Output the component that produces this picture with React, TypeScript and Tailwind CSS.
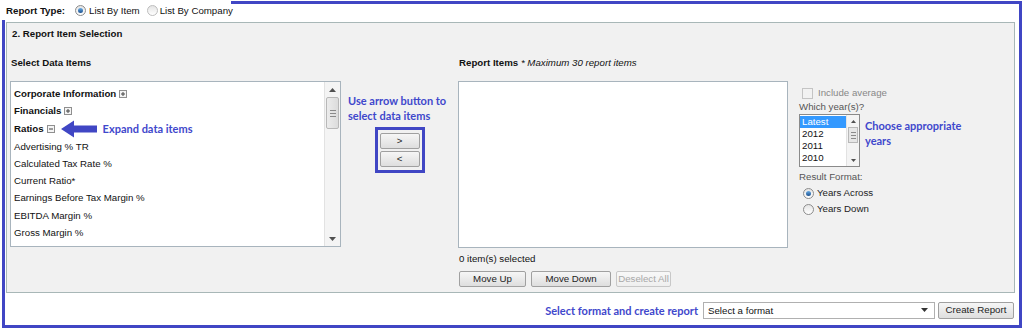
import React from 'react';

// Annotation colour used for the highlight frame and helper text
const NOTE = 'text-[#3f48cc]';

const ratioItems = [
  'Advertising % TR',
  'Calculated Tax Rate %',
  'Current Ratio*',
  'Earnings Before Tax Margin %',
  'EBITDA Margin %',
  'Gross Margin %',
  'Interest Coverage',
];

const TreeBox = ({ open }: { open?: boolean }) => (
  <span className="ml-[3px] inline-flex h-[8px] w-[8px] shrink-0 items-center justify-center border border-[#8f8f8f] bg-[#f4f4f4]">
    <svg width="6" height="6" viewBox="0 0 6 6">
      <path d="M1 3h4" stroke="#444" strokeWidth="1" />
      {!open && <path d="M3 1v4" stroke="#444" strokeWidth="1" />}
    </svg>
  </span>
);

const Radio = ({ checked, dim }: { checked?: boolean; dim?: boolean }) => (
  <span
    className={`inline-flex h-[11px] w-[11px] shrink-0 items-center justify-center rounded-full border ${
      dim ? 'border-[#bdbdbd]' : 'border-[#8c8c8c]'
    } bg-gradient-to-b from-[#e4e4e4] to-[#ffffff]`}
  >
    {checked && <span className="h-[5px] w-[5px] rounded-full bg-gradient-to-b from-[#6aaee8] to-[#1c4f8c]" />}
  </span>
);

const ScrollBar = ({ h }: { h: string }) => (
  <div className={`flex w-[16px] shrink-0 flex-col border-l border-[#e2e2e2] bg-[#f4f4f4] ${h}`}>
    <div className="flex h-[15px] items-center justify-center">
      <svg width="7" height="4" viewBox="0 0 7 4"><path d="M0 4L3.5 0L7 4z" fill="#505050" /></svg>
    </div>
    <div className="mx-[1px] flex h-[32px] flex-col items-center justify-center gap-[2px] rounded-[2px] border border-[#b8b8b8] bg-gradient-to-r from-[#ececec] to-[#dcdcdc]">
      <span className="h-px w-[6px] bg-[#8a8a8a]" />
      <span className="h-px w-[6px] bg-[#8a8a8a]" />
      <span className="h-px w-[6px] bg-[#8a8a8a]" />
    </div>
    <div className="flex-1" />
    <div className="flex h-[15px] items-center justify-center">
      <svg width="7" height="4" viewBox="0 0 7 4"><path d="M0 0L3.5 4L7 0z" fill="#505050" /></svg>
    </div>
  </div>
);

const Btn = ({ children, w, disabled }: { children: React.ReactNode; w: string; disabled?: boolean }) => (
  <button
    className={`flex h-[16px] shrink-0 items-center justify-center whitespace-nowrap rounded-[2px] border bg-gradient-to-b text-[9.7px] leading-none ${w} ${
      disabled ? 'border-[#c8c8c8] from-[#f8f8f8] to-[#efefef] text-[#a8a8a8]' : 'border-[#a0a0a0] from-[#f6f6f6] to-[#dedede] text-[#222]'
    }`}
  >
    {children}
  </button>
);

export default function App() {
  return (
    <div className="relative h-[332px] w-[1024px] overflow-hidden whitespace-nowrap bg-white font-['Liberation_Sans',Arial,sans-serif] text-[9.7px] leading-[15px] text-[#111]">
      {/* highlight frame drawn over the form */}
      <div className="pointer-events-none absolute left-[2px] top-[1px] z-10 h-[327px] w-[1020px] border-[3px] border-[#4046c4]" />

      {/* report type row, sits on top of the frame's corner */}
      <div className="relative z-20 flex h-[20px] w-[231px] items-center bg-white pl-[6px]">
        <span className="font-bold">Report Type:</span>
        <span className="ml-[10px] mr-[3px] flex"><Radio checked /></span>
        <span>List By Item</span>
        <span className="ml-[7px] mr-[2px] flex"><Radio dim /></span>
        <span>List By Company</span>
      </div>

      {/* section panel */}
      <div className="ml-[6px] mt-[2px] h-[271px] w-[1009px] border border-[#a8b7b7] bg-[#f1f1f1]">
        <div className="pl-[5px] pt-[3px] font-bold">2. Report Item Selection</div>

        <div className="mt-[14px] flex pl-[3px]">
          {/* left: data items */}
          <div className="flex w-[331px] shrink-0 flex-col">
            <div className="h-[26px] pl-[1px] font-bold">Select Data Items</div>
            <div className="flex h-[166px] border border-[#a8b4bd] bg-white">
              <div className="flex-1 overflow-hidden pl-[3px] pt-[3px] leading-[17.3px]">
                <div className="flex items-center font-bold">Corporate Information<TreeBox /></div>
                <div className="flex items-center font-bold">Financials<TreeBox /></div>
                <div className="flex items-center">
                  <span className="font-bold">Ratios</span>
                  <TreeBox open />
                  <svg className="ml-[6px]" width="36" height="18" viewBox="0 0 36 18">
                    <path d="M0 9L13 0.5V5.5H36V12.5H13V17.5Z" fill="#4046c4" />
                  </svg>
                  <span className={`ml-[6px] font-['Lato',sans-serif] text-[11px] font-bold ${NOTE}`}>Expand data items</span>
                </div>
                {ratioItems.map((r) => (
                  <div key={r}>{r}</div>
                ))}
              </div>
              <ScrollBar h="h-[164px]" />
            </div>
          </div>

          {/* middle: arrow buttons */}
          <div className="flex w-[117px] shrink-0 flex-col items-center pt-[38px]">
            <div className={`ml-[7px] self-start font-['Lato',sans-serif] text-[11px] font-bold leading-[15px] ${NOTE}`}>
              Use arrow button to
              <br />
              select data items
            </div>
            <div className="mt-[4px] flex flex-col gap-[2px] border-[3px] border-[#4046c4] px-[2px] py-[3px]">
              <Btn w="w-[40px]">&gt;</Btn>
              <Btn w="w-[40px]">&lt;</Btn>
            </div>
          </div>

          {/* right: report items */}
          <div className="flex w-[330px] shrink-0 flex-col">
            <div className="h-[26px] pl-px">
              <span className="font-bold">Report Items</span>
              <span className="italic"> * Maximum 30 report items</span>
            </div>
            <div className="h-[167px] border border-[#a8b4bd] bg-white" />
            <div className="mt-[3px] pl-px">0 item(s) selected</div>
            <div className="mt-[5px] flex gap-[5px] pl-px">
              <Btn w="w-[67px]">Move Up</Btn>
              <Btn w="w-[80px]">Move Down</Btn>
              <Btn w="w-[55px]" disabled>Deselect All</Btn>
            </div>
          </div>

          {/* options column */}
          <div className="ml-[11px] flex flex-col pt-[31px] leading-[14px] text-[#555]">
            <div className="flex h-[14px] items-center">
              <span className="ml-[3px] h-[11px] w-[11px] border border-[#c4c4c4] bg-[#f2f2f2]" />
              <span className="ml-[5px] text-[#888]">Include average</span>
            </div>
            <div>Which year(s)?</div>
            <div className="flex items-start">
              <div className="flex h-[53px] w-[61px] border border-[#8a8a8a] bg-white">
                <div className="flex-1 pt-px leading-[12px] text-[#111]">
                  <div className="bg-[#3399ff] pl-[2px] text-white">Latest</div>
                  <div className="pl-[2px]">2012</div>
                  <div className="pl-[2px]">2011</div>
                  <div className="pl-[2px]">2010</div>
                </div>
                <div className="flex w-[13px] flex-col border-l border-[#e2e2e2] bg-[#f4f4f4]">
                  <div className="flex h-[12px] items-center justify-center">
                    <svg width="5" height="3" viewBox="0 0 5 3"><path d="M0 3L2.5 0L5 3z" fill="#505050" /></svg>
                  </div>
                  <div className="mx-px flex h-[16px] flex-col items-center justify-center gap-[2px] border border-[#b8b8b8] bg-[#e6e6e6]">
                    <span className="h-px w-[5px] bg-[#8a8a8a]" />
                    <span className="h-px w-[5px] bg-[#8a8a8a]" />
                    <span className="h-px w-[5px] bg-[#8a8a8a]" />
                  </div>
                  <div className="flex-1" />
                  <div className="flex h-[12px] items-center justify-center">
                    <svg width="5" height="3" viewBox="0 0 5 3"><path d="M0 0L2.5 3L5 0z" fill="#505050" /></svg>
                  </div>
                </div>
              </div>
              <div className={`ml-[5px] mt-[4px] font-['Lato',sans-serif] text-[11px] font-bold leading-[15px] ${NOTE}`}>
                Choose appropriate
                <br />
                years
              </div>
            </div>
            <div className="mt-[3px]">Result Format:</div>
            <div className="mt-[2px] flex h-[14px] items-center pl-[4px] text-[#222]">
              <Radio checked />
              <span className="ml-[3px]">Years Across</span>
            </div>
            <div className="mt-[2px] flex h-[14px] items-center pl-[4px] text-[#222]">
              <Radio />
              <span className="ml-[3px]">Years Down</span>
            </div>
          </div>
        </div>
      </div>

      {/* bottom action row */}
      <div className="flex h-[34px] items-center justify-end pr-[10px]">
        <span className={`mr-[5px] font-['Lato',sans-serif] text-[11px] font-bold ${NOTE}`}>Select format and create report</span>
        <div className="flex h-[17px] w-[232px] items-center justify-between border border-[#b0b0b0] bg-white pl-[4px] pr-[6px]">
          <span>Select a format</span>
          <svg width="7" height="4" viewBox="0 0 7 4"><path d="M0 0L3.5 4L7 0z" fill="#333" /></svg>
        </div>
        <Btn w="ml-[3px] h-[17px] w-[76px]">Create Report</Btn>
      </div>
    </div>
  );
}
